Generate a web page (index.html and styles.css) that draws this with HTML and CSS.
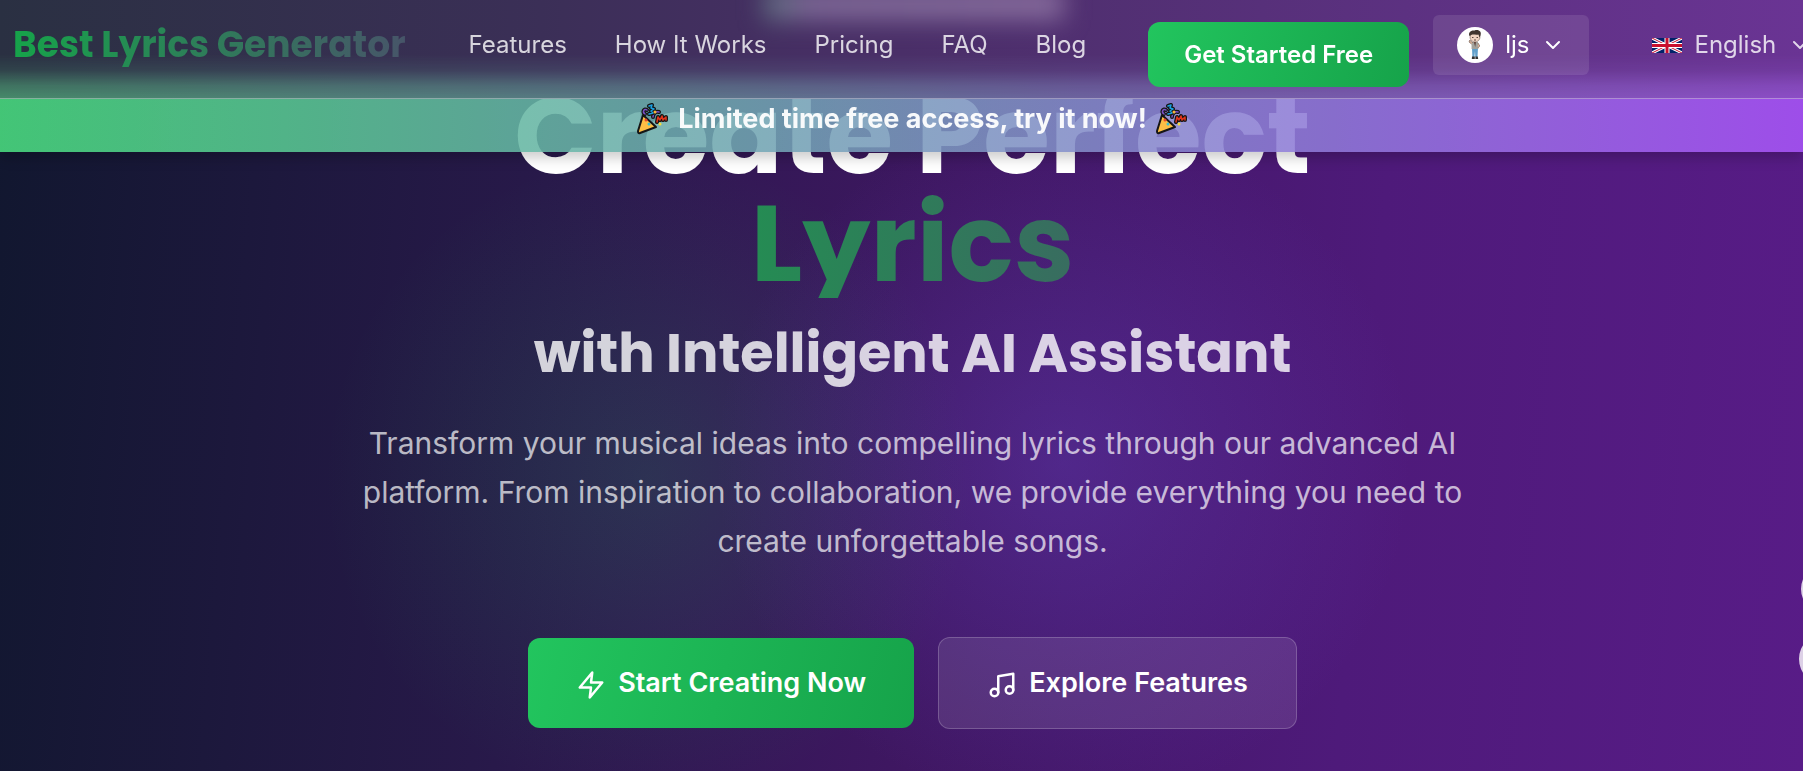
FILE: index.html
```
<!DOCTYPE html>
<html lang="en">
<head>
  <meta charset="UTF-8" />
  <meta name="viewport" content="width=device-width, initial-scale=1.0" />
  <title>Best Lyrics Generator</title>
  <link rel="stylesheet" href="styles.css">
</head>
<body>
  <main class="hero">
    <h1>Create Perfect <span class="accent">Lyrics</span></h1>
    <h2>with Intelligent AI Assistant</h2>
    <p>Transform your musical ideas into compelling lyrics through our advanced AI platform. From inspiration to collaboration, we provide everything you need to create unforgettable songs.</p>
    <div class="hero-actions">
      <button class="btn btn-large">
        <svg class="icon" viewBox="0 0 24 24" aria-hidden="true"><path d="M13 2L3 14h9l-1 8 10-12h-9l1-8z" /></svg>
        Start Creating Now
      </button>
      <button class="btn btn-large btn-glass">
        <svg class="icon" viewBox="0 0 24 24" aria-hidden="true"><path d="M9 18V5l12-2v13" /><circle cx="6" cy="18" r="3" /><circle cx="18" cy="16" r="3" /></svg>
        Explore Features
      </button>
    </div>
  </main>

  <div class="promo">
    <svg class="popper" viewBox="0 0 32 32" aria-hidden="true"><use href="#popper" /></svg>
    <span>Limited time free access, try it now!</span>
    <svg class="popper" viewBox="0 0 32 32" aria-hidden="true"><use href="#popper" /></svg>
  </div>

  <header class="navbar">
    <a class="logo" href="#">Best Lyrics Generator</a>
    <nav class="nav-links">
      <a href="#features">Features</a>
      <a href="#how">How It Works</a>
      <a href="#pricing">Pricing</a>
      <a href="#faq">FAQ</a>
      <a href="#blog">Blog</a>
    </nav>
    <div class="nav-actions">
      <button class="btn btn-small">Get Started Free</button>
      <button class="user-menu">
        <svg class="avatar" viewBox="0 0 36 36" aria-hidden="true">
          <circle cx="18" cy="18" r="18" fill="#fff" />
          <path d="M15 21h6l-.5 9h-2.200l-.3-6-.6 6h-2z" fill="#5f9fca" />
          <path d="M15 29.500h2.800V32h-3zM18.400 29.500h2.400l.4 2.500h-2.800z" fill="#333" />
          <path d="M14.500 15h6.500l.4 7h-6.800z" fill="#a3a29c" />
          <path d="M14.500 17l-2.500-2 .8-2 3 3M21 16l1.800 3-2 2" fill="#ddb298" stroke="#685247" stroke-width=".6" />
          <path d="M16.800 15h2.200l-.8 5z" fill="#61443c" />
          <ellipse cx="18" cy="10" rx="5" ry="5" fill="#efd3c1" stroke="#796055" stroke-width=".6" />
          <path d="M12.500 9c-1.500-3 1-6 5-5.500 4-1.500 7.500 1 6 5l-1 2-1-3c-3 1-6-1-8 1z" fill="#40352f" />
          <path d="M15 10.500h1.500M19.500 10.500H21M17 13h2" stroke="#4c3931" stroke-width=".9" />
        </svg>
        <span>ljs</span>
        <svg class="chevron" viewBox="0 0 24 24" aria-hidden="true"><path d="M6 9l6 6 6-6" /></svg>
      </button>
      <button class="lang-menu">
        <svg class="flag" viewBox="0 0 60 30" preserveAspectRatio="none" aria-hidden="true">
          <path fill="#012169" d="M0 0h60v30H0z" />
          <path d="M0 0l60 30M60 0L0 30" stroke="#fff" stroke-width="6" />
          <path d="M0 0l60 30M60 0L0 30" stroke="#c8102e" stroke-width="2" />
          <path d="M30 0v30M0 15h60" stroke="#fff" stroke-width="10" />
          <path d="M30 0v30M0 15h60" stroke="#c8102e" stroke-width="6" />
        </svg>
        <span>English</span>
        <svg class="chevron" viewBox="0 0 24 24" aria-hidden="true"><path d="M6 9l6 6 6-6" /></svg>
      </button>
    </div>
  </header>

  <div class="dots">
    <span class="dot dot-small"></span>
    <span class="dot"></span>
  </div>

  <svg class="sprite" aria-hidden="true">
    <symbol id="popper" viewBox="0 0 32 32">
      <g fill="none" stroke-linecap="round" stroke-linejoin="round">
        <path d="M8 11c-3-2-1-6 2-4M16 14c0-4 3-6 6-5" stroke="#161616" stroke-width="4" />
        <path d="M8 11c-3-2-1-6 2-4M16 14c0-4 3-6 6-5" stroke="#7a50c8" stroke-width="1.500" />
        <path d="M12 3l3-1-1 3 3 1-3 2 2 2-4 1M20 19l1-5 2 3 2-4 1 4 3-3v3" stroke="#161616" stroke-width="4" />
        <path d="M12 3l3-1-1 3 3 1-3 2 2 2-4 1" stroke="#1aa0e0" stroke-width="1.500" />
        <path d="M20 19l1-5 2 3 2-4 1 4 3-3v3" stroke="#e0341c" stroke-width="1.500" />
        <path d="M6 12l13 12L3 30c-1.500.5-2-.5-2-2z" fill="#fdbf45" stroke="#161616" stroke-width="2" />
      </g>
      <circle cx="12" cy="21" r="1.500" fill="#35bfd4" />
      <circle cx="9" cy="17" r="1.500" fill="#e9452d" />
      <circle cx="23" cy="21" r="1.500" fill="#f7dc35" />
      <circle cx="18" cy="9" r="1.500" fill="#f7b735" />
    </symbol>
  </svg>
</body>
</html>
```

FILE: styles.css
```
* {
  box-sizing: border-box;
}
body {
  margin: 0;
  min-height: 100vh;
  overflow: hidden;
  font-family: Inter, sans-serif;
  font-size: 24px;
  line-height: 36px;
  color: #fff;
  background:
    radial-gradient(circle at 36% 62%, rgba(34, 197, 94, 0.15), transparent 26%),
    radial-gradient(circle at 59% 60%, rgba(110, 75, 215, 0.3), transparent 30%),
    linear-gradient(95deg, #11172f, #28194a 30%, #3f1762 52%, #4e1a7a 75%, #581c87);
}
button {
  border: none;
  color: inherit;
  font: inherit;
  white-space: nowrap;
  cursor: pointer;
}
a {
  color: inherit;
  text-decoration: none;
}
h1, h2, p {
  margin: 0;
}
.navbar {
  position: fixed;
  top: 0;
  left: 0;
  right: 0;
  z-index: 20;
  height: 99px;
  overflow: hidden;
  display: flex;
  align-items: flex-start;
  padding: 15px 13px;
  background: linear-gradient(90deg, #2a3042, #3b2f57 30%, #4a2f68 50%, #57307a 70%, #6a3494);
}
/* promo colours glowing through the glass bar */
.navbar::before {
  content: "";
  position: absolute;
  inset: 54px 0 0;
  z-index: -1;
  border-bottom: 1px solid rgba(255, 255, 255, 0.35);
  background: linear-gradient(90deg, #478a6b, #5a7a87 35%, #6d64a0 60%, #8c4ec6);
  mask-image: linear-gradient(transparent, rgba(0, 0, 0, 0.22) 36%, rgba(0, 0, 0, 0.75) 70%, #000);
}
.navbar::after {
  content: "";
  position: absolute;
  top: -12px;
  left: 50%;
  z-index: -1;
  width: 300px;
  height: 32px;
  margin-left: -138px;
  background: linear-gradient(90deg, #5b6f7c, #7d6796 15%, #866b9c);
  filter: blur(12px);
}
.logo {
  flex: none;
  margin-right: 63px;
  font-family: Poppins, Inter, sans-serif;
  font-size: 36px;
  font-weight: 700;
  line-height: 60px;
  color: transparent;
  background: linear-gradient(90deg, #16a34a, #475569);
  background-clip: text;
}
.nav-links {
  display: flex;
  gap: 48px;
  line-height: 60px;
  color: rgba(255, 255, 255, 0.8);
  white-space: nowrap;
}
.nav-actions {
  display: flex;
  align-items: flex-start;
  gap: 24px;
  margin-left: 62px;
}
.btn {
  display: flex;
  align-items: center;
  border-radius: 12px;
  font-weight: 600;
  background: linear-gradient(105deg, #22c55e, #16a34a);
}
.btn-small {
  height: 65px;
  margin-top: 7px;
  padding: 0 36px;
}
.user-menu,
.lang-menu {
  display: flex;
  align-items: center;
  gap: 12px;
  height: 60px;
  padding: 0 24px;
  border-radius: 6px;
  background: rgba(255, 255, 255, 0.1);
}
.lang-menu {
  margin-left: 15px;
  background: none;
  color: rgba(255, 255, 255, 0.8);
}
.avatar {
  width: 36px;
  height: 36px;
}
.flag {
  width: 30px;
  height: 15px;
}
.chevron {
  width: 24px;
  height: 24px;
  fill: none;
  stroke: currentColor;
  stroke-width: 2;
  stroke-linecap: round;
  stroke-linejoin: round;
}
.promo {
  position: fixed;
  top: 84px;
  left: 0;
  right: 0;
  z-index: 10;
  display: flex;
  justify-content: center;
  gap: 9px;
  height: 68px;
  padding: 17px 0 0 22px;
  font-size: 27px;
  font-weight: 700;
  color: rgba(255, 255, 255, 0.95);
  background: linear-gradient(90deg, rgba(74, 222, 128, 0.88), rgba(168, 85, 247, 0.88));
  box-shadow: 0 6px 12px rgba(0, 0, 0, 0.2);
}
.popper {
  width: 32px;
  height: 36px;
}
.hero {
  display: flex;
  flex-direction: column;
  align-items: center;
  padding: 82px 0 42px 22px;
  text-align: center;
}
h1, h2 {
  font-family: Poppins, Inter, sans-serif;
  font-weight: 700;
}
h1 {
  font-size: 108px;
  line-height: 108px;
}
.accent {
  display: block;
  color: transparent;
  background: linear-gradient(90deg, #16a34a, #475569);
  background-clip: text;
}
h2 {
  margin-top: 19px;
  font-size: 54px;
  line-height: 72px;
  color: rgba(255, 255, 255, 0.8);
}
.hero p {
  max-width: 1152px;
  margin-top: 30px;
  font-size: 30px;
  line-height: 49px;
  color: rgba(255, 255, 255, 0.7);
}
.hero-actions {
  display: flex;
  align-items: center;
  gap: 24px;
  margin-top: 71px;
}
.btn-large {
  height: 90px;
  padding: 0 48px;
  gap: 12px;
  font-size: 27px;
}
.btn-glass {
  height: 92px;
  border: 1px solid rgba(255, 255, 255, 0.2);
  background: rgba(255, 255, 255, 0.1);
}
.icon {
  width: 30px;
  height: 30px;
  margin-top: 4px;
  fill: none;
  stroke: currentColor;
  stroke-width: 2;
  stroke-linecap: round;
  stroke-linejoin: round;
}
.dots {
  position: fixed;
  top: 565px;
  right: -48px;
  display: flex;
  flex-direction: column;
  align-items: center;
  gap: 20px;
}
.dot {
  width: 52px;
  height: 52px;
  border-radius: 50%;
  background: rgba(255, 255, 255, 0.8);
}
.dot-small {
  width: 48px;
  height: 48px;
}
.sprite {
  display: none;
}
```
